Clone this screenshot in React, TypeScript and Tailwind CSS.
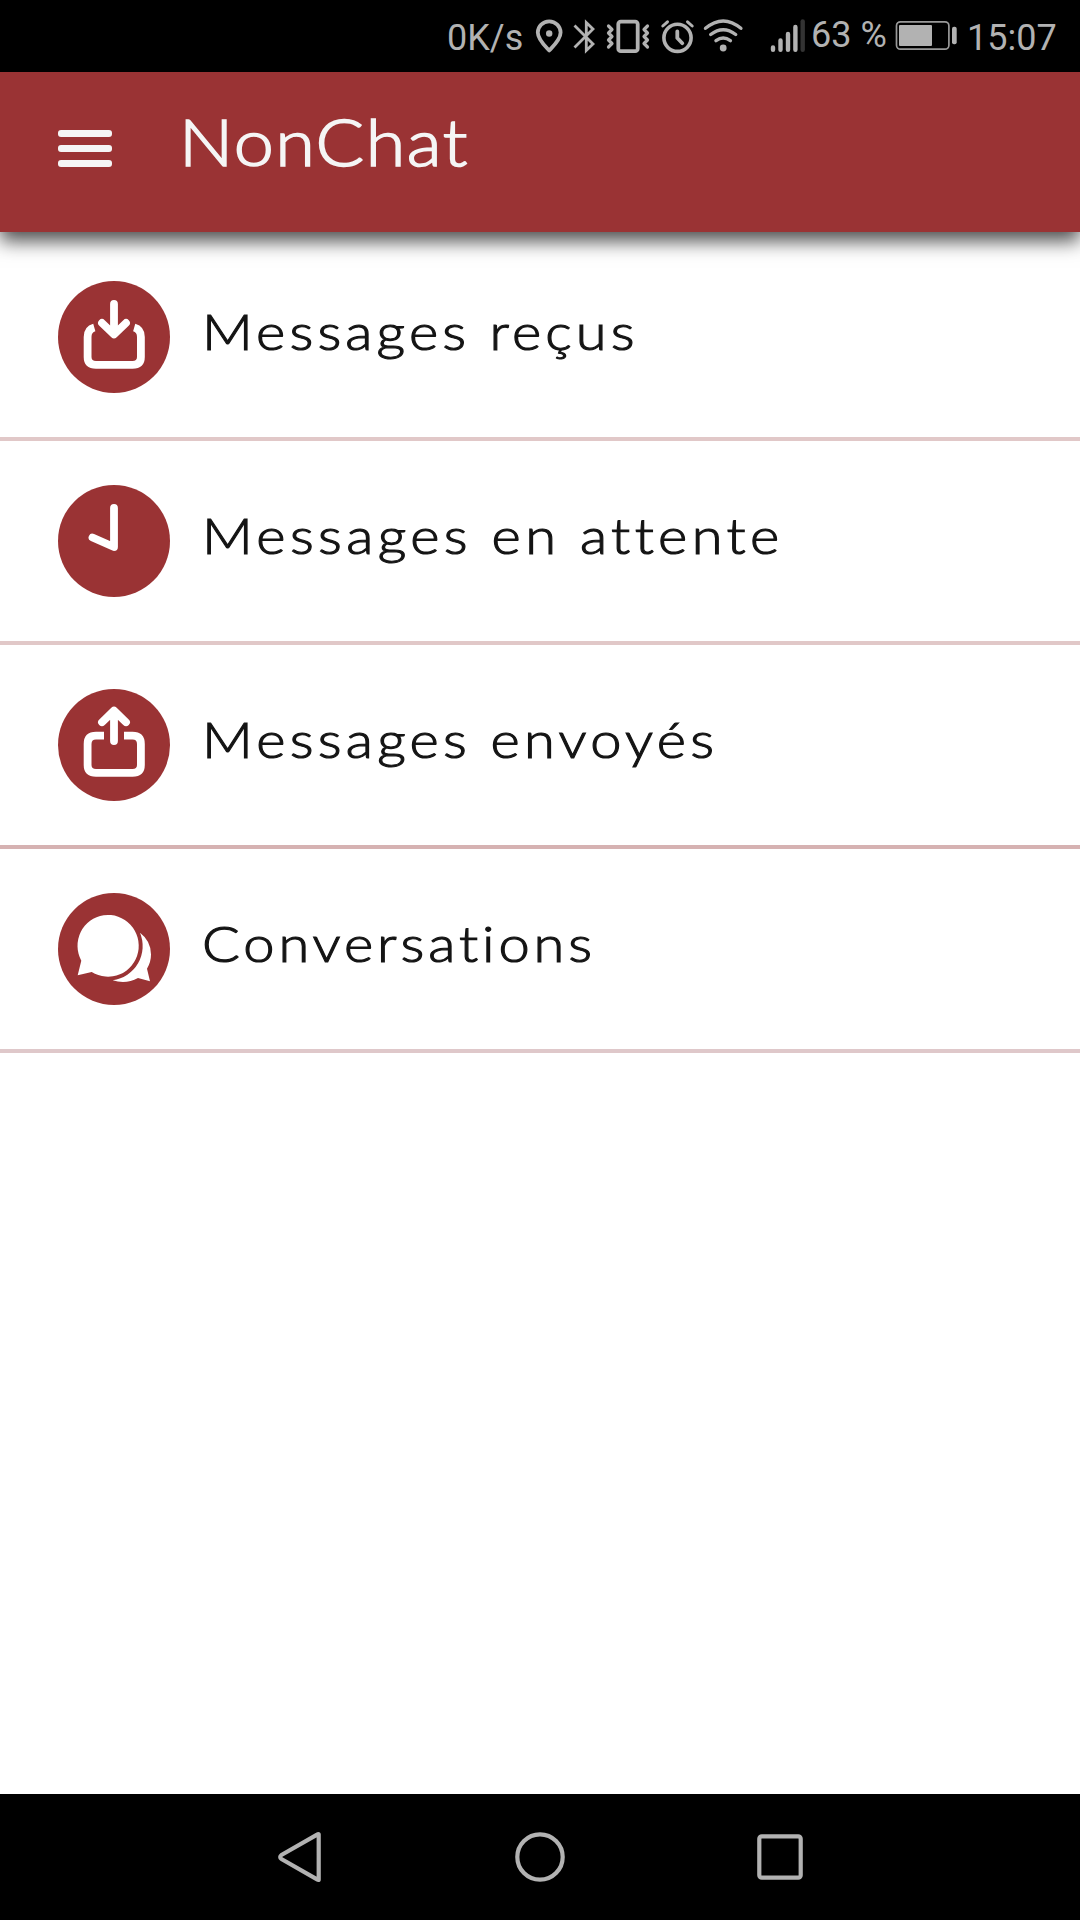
import type { ReactNode } from "react"

type MenuItem = {
    label: string
    icon: ReactNode
    border: string
    tracking: string
}

const stroke = {
    fill: "none",
    stroke: "currentColor",
    strokeLinecap: "round" as const,
    strokeLinejoin: "round" as const,
}

function InboxIcon() {
    return (
        <svg viewBox="0 0 112 112" className="size-28">
            <g {...stroke} strokeWidth="7.8">
                <path d="M56 23V53M44 42L56 53.5L68 42" />
                <path
                    d="M36.3 46.6Q29.6 48.5 29.6 56V76Q29.6 83.8 38 83.8H74.5Q82.9 83.8 82.9 76V56Q82.9 48.5 76.2 46.6"
                    strokeLinecap="butt"
                />
            </g>
        </svg>
    )
}

function ClockIcon() {
    return (
        <svg viewBox="0 0 112 112" className="size-28">
            <path d="M56 23V62L34.5 52.5" {...stroke} strokeWidth="7.8" />
        </svg>
    )
}

function OutboxIcon() {
    return (
        <svg viewBox="0 0 112 112" className="size-28">
            <g {...stroke} strokeWidth="7.8">
                <path d="M56 52V22M44 33.2L56 21.6L68 33.2" />
                <path
                    d="M46 46.7H38Q29.6 46.7 29.6 55V76Q29.6 83.8 38 83.8H74.5Q82.9 83.8 82.9 76V55Q82.9 46.7 74.5 46.7H66"
                    strokeLinecap="butt"
                />
            </g>
        </svg>
    )
}

function ChatIcon() {
    return (
        <svg viewBox="0 0 112 112" className="size-28" fill="currentColor">
            <path d="M23.3 67.7L19.7 82.3L33.7 78.9A30.6 30.9 0 1 0 23.3 67.7Z" />
            <path d="M82 39.7Q93 48 93 61.5Q93 69 89 75.7L92 88.3L80 85Q68 91.5 54.7 87.3A34.6 34.6 0 0 0 82 39.7Z" />
        </svg>
    )
}

const items: MenuItem[] = [
    { label: "Messages reçus", icon: <InboxIcon />, border: "border-[#e1c8c8]", tracking: "tracking-[3.7px]" },
    { label: "Messages en attente", icon: <ClockIcon />, border: "border-[#e1c8c8]", tracking: "tracking-[3.9px]" },
    { label: "Messages envoyés", icon: <OutboxIcon />, border: "border-[#d6b2b2]", tracking: "tracking-[3.8px]" },
    { label: "Conversations", icon: <ChatIcon />, border: "border-[#dfc8ca]", tracking: "tracking-[3.5px]" },
]

function StatusBar() {
    return (
        <div className="flex h-[72px] shrink-0 items-start bg-black pl-[447px] font-[Roboto,sans-serif] text-[36px] leading-[72px] text-[#b2b2b2]">
            <span className="w-[88px] whitespace-nowrap pt-0.5">0K/s</span>
            {/* location */}
            <svg width="35" height="72" viewBox="535 0 35 72" {...stroke} strokeWidth="3.8">
                <path d="M549.2 50.5C545 46 537.8 39.5 537.8 32.5A11.4 11.2 0 0 1 560.6 32.5C560.6 39.5 553.5 46 549.2 50.5Z" />
                <circle cx="549.2" cy="33.5" r="3.2" fill="currentColor" stroke="none" />
            </svg>
            {/* bluetooth */}
            <svg width="33" height="72" viewBox="570 0 33 72" {...stroke} strokeWidth="2.8" strokeLinecap="butt" strokeLinejoin="miter">
                <path d="M574.5 25.5L593 44L586.3 50.5V22.5L593 29L574.5 47.5" />
            </svg>
            {/* vibrate */}
            <svg width="54" height="72" viewBox="603 0 54 72" {...stroke} strokeWidth="3.8">
                <rect x="618.3" y="21.6" width="19.4" height="29.6" rx="2.5" />
                <path d="M608.5 26L612 29.5L608.5 33L612 36.5L608.5 40L612 43.5L608.5 47" strokeWidth="3.2" />
                <path d="M647.5 26L644 29.5L647.5 33L644 36.5L647.5 40L644 43.5L647.5 47" strokeWidth="3.2" />
            </svg>
            {/* alarm */}
            <svg width="43" height="72" viewBox="657 0 43 72" {...stroke} strokeWidth="3.6">
                <circle cx="677.5" cy="37.8" r="13.6" />
                <path d="M677.3 31.5V38L682.3 43.2" strokeWidth="3.8" />
                <path d="M662.8 26L667.5 21.8M692.2 26L687.5 21.8" strokeWidth="3" />
            </svg>
            {/* wifi */}
            <svg width="66" height="72" viewBox="700 0 66 72" {...stroke} strokeWidth="3.4">
                <path d="M705.5 28.3Q723.2 13.5 740.9 28.3M710.7 34.5Q723.2 24.8 735.7 34.5M716 40.7Q723.2 35.5 730.4 40.7" />
                <circle cx="723.2" cy="48" r="3.4" fill="currentColor" stroke="none" />
            </svg>
            {/* signal */}
            <svg width="45" height="72" viewBox="766 0 45 72" {...stroke} strokeWidth="4.4">
                <path d="M773 47.5V49.8M780.5 40.5V49.8M788 34V49.8M795.4 27V49.8" />
                <path d="M802.7 21.5V49.8" stroke="#333" />
            </svg>
            <span className="-mt-px w-[84px] whitespace-nowrap">63 %</span>
            {/* battery */}
            <svg width="72" height="72" viewBox="895 0 72 72" fill="currentColor">
                <rect x="896.5" y="21.8" width="52.4" height="27.4" rx="4" fill="none" stroke="#999" strokeWidth="1.7" />
                <rect x="899" y="25" width="33" height="21" rx="1" />
                <rect x="952" y="26.7" width="4.7" height="17.6" rx="2" />
            </svg>
            <span className="whitespace-nowrap pt-0.5">15:07</span>
        </div>
    )
}

function NavBar() {
    return (
        <nav className="flex h-[126px] shrink-0 items-center justify-center gap-[190px] bg-black text-[#b2b2b2]">
            <svg width="50" height="50" viewBox="0 0 50 50" {...stroke} strokeWidth="4.2">
                <path d="M43.7 2.6V47.4Q43.7 48.4 42.1 47.4L6.4 27Q4 25 6.4 23L42.1 2.6Q43.7 1.6 43.7 2.6Z" />
            </svg>
            <svg width="50" height="50" viewBox="0 0 50 50" {...stroke} strokeWidth="4.2">
                <circle cx="25" cy="25" r="22.7" />
            </svg>
            <svg width="50" height="50" viewBox="0 0 50 50" {...stroke} strokeWidth="4.2">
                <rect x="4.3" y="4.3" width="41.4" height="41.4" rx="2.5" />
            </svg>
        </nav>
    )
}

export default function App() {
    return (
        <div className="flex h-[1920px] w-[1080px] flex-col overflow-hidden bg-white font-[Lato,sans-serif]">
            <StatusBar />
            <header className="relative flex h-40 shrink-0 items-start bg-[#9a3334] pl-[58px] text-[#f5f5f5] shadow-[0_9px_18px_rgba(0,0,0,0.7)]">
                <button className="mt-[58px] flex w-[54px] flex-col gap-2" aria-label="Menu">
                    <span className="h-[7px] w-full rounded-[3px] bg-current" />
                    <span className="h-[7px] w-full rounded-[3px] bg-current" />
                    <span className="h-[7px] w-full rounded-[3px] bg-current" />
                </button>
                <h1 className="ml-[67px] mt-[29px] origin-left scale-x-[1.09] text-[66px] font-light leading-[80px] tracking-[1.4px] [-webkit-text-stroke:1.6px_currentColor]">
                    NonChat
                </h1>
            </header>
            <main className="flex-1 pt-[5px]">
                {items.map((item) => (
                    <div key={item.label} className={`flex h-[204px] items-start border-b-4 pl-[58px] pt-11 ${item.border}`}>
                        <div className="size-28 shrink-0 rounded-full bg-[#9a3334] text-white">{item.icon}</div>
                        <span
                            className={`ml-8 mt-5 origin-left scale-x-[1.12] whitespace-nowrap text-[50px] font-light leading-[60px] text-[#141414] [-webkit-text-stroke:1.1px_currentColor] ${item.tracking}`}
                        >
                            {item.label}
                        </span>
                    </div>
                ))}
            </main>
            <NavBar />
        </div>
    )
}
